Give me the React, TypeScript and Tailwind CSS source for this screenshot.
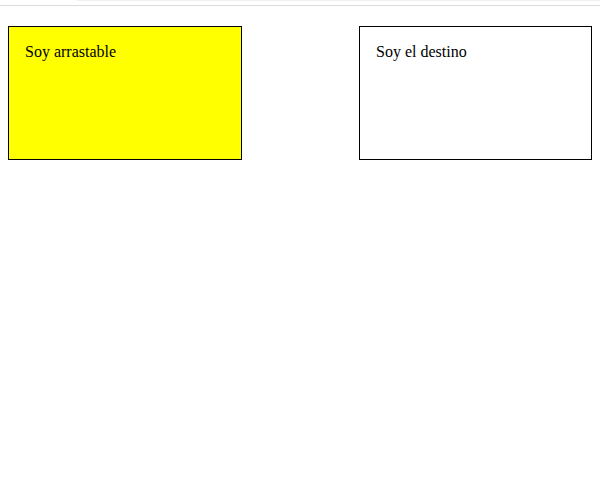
export default function App() {
  return (
    <div className="w-[600px] h-[480px] bg-white font-['Liberation_Serif','Times_New_Roman',serif] text-[16px] leading-[normal] text-black">
      <div className="h-[6px] border-b border-[#dcdcdc] flex">
        <div className="w-[77px]" />
        <div className="flex-1 h-px bg-[#f0f0f0]" />
      </div>
      <div className="flex justify-between px-2 mt-5">
        <div className="w-[234px] h-[134px] border border-black bg-[#ffff00] p-4">
          Soy arrastable
        </div>
        <div className="w-[233px] h-[134px] border border-black bg-white p-4">
          Soy el destino
        </div>
      </div>
    </div>
  );
}
